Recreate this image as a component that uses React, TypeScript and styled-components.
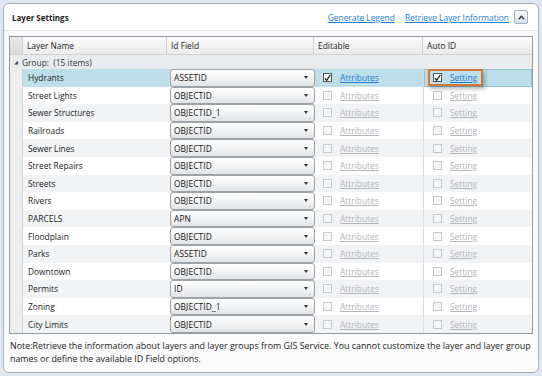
import React from 'react';
import styled, {createGlobalStyle} from 'styled-components';

const GlobalStyle = createGlobalStyle`
  html, body {
    margin: 0;
    padding: 0;
    background: #dfe7f0;
  }
  body {
    font-family: 'Open Sans', 'Liberation Sans', sans-serif;
    font-size: 8.4px;
    color: #222;
  }
`;

const Page = styled.div`
  width: 542px;
  height: 376px;
  padding: 3px;
  box-sizing: border-box;
`;

const Panel = styled.div`
  height: 370px;
  box-sizing: border-box;
  background: #fff;
  border: 1px solid #a3b1bf;
  border-radius: 6px;
  display: flex;
  flex-direction: column;
`;

const Header = styled.div`
  height: 26px;
  display: flex;
  align-items: center;
  padding: 0 10px 0 8px;
  border-bottom: 1px solid #e6e6e6;
  border-radius: 6px 6px 0 0;
  .title {
    font-weight: 700;
    font-size: 8px;
    flex: 1;
  }
`;

const HeaderLink = styled.a`
  color: #2280d4;
  text-decoration: underline;
  margin-left: 10px;
  cursor: pointer;
`;

const CollapseButton = styled.button`
  width: 14px;
  height: 14px;
  margin-left: 5px;
  padding: 0;
  border: 1px solid #9fb3c6;
  border-radius: 2px;
  background: linear-gradient(#f7fafd, #d5e2ee);
  display: flex;
  align-items: center;
  justify-content: center;
  svg {
    width: 7px;
    height: 5px;
  }
`;

const Body = styled.div`
  flex: 1;
  padding: 5px 5px 0 5px;
  background: #fbfbfb;
  border-radius: 0 0 6px 6px;
`;

const Grid = styled.div`
  border: 1px solid #8e9ba7;
  background: #fff;
`;

const cols = '13px 144px 147px 109px 1fr';

const HeadRow = styled.div`
  display: grid;
  grid-template-columns: ${cols};
  height: 17px;
  background: linear-gradient(#fafafa, #ebebeb);
  border-bottom: 1px solid #d2d2d2;
`;

const HeadCell = styled.div<{$gutter?: boolean}>`
  display: flex;
  align-items: center;
  padding-left: 4px;
  border-right: 1px solid #d0d0d0;
  background: ${p => p.$gutter ? 'linear-gradient(#e9e9e9, #dadada)' : 'transparent'};
  &:last-child {
    border-right: none;
  }
`;

const GroupRow = styled.div`
  height: 14px;
  display: flex;
  align-items: center;
  padding-left: 4px;
  background: #e9ecee;
  color: #333;
  .tri {
    font-size: 5px;
    margin-right: 4px;
    color: #444;
  }
`;

const Row = styled.div<{$alt?: boolean; $selected?: boolean}>`
  display: grid;
  grid-template-columns: ${cols};
  height: 17.6px;
  background: ${p => p.$selected ? '#bddeea' : p.$alt ? '#f1f3f5' : '#fff'};
`;

const Gutter = styled.div`
  background: #eceef0;
  border-right: 1px solid #cfd3d6;
`;

const NameCell = styled.div`
  display: flex;
  align-items: center;
  padding-left: 5px;
`;

const IdCell = styled.div`
  padding: 0 0 0 3px;
  display: flex;
  align-items: stretch;
`;

const Dropdown = styled.div`
  flex: 1;
  margin: 0 -1px 0 0;
  display: flex;
  align-items: center;
  justify-content: space-between;
  padding: 0 6px 0 3px;
  border: 1px solid #9ea3a8;
  border-radius: 3px;
  background: linear-gradient(#ffffff 0%, #f3f4f5 50%, #e1e3e6 100%);
  color: #111;
  font-size: 8.4px;
  letter-spacing: 0.1px;
  .arrow {
    width: 0;
    height: 0;
    border-left: 2.5px solid transparent;
    border-right: 2.5px solid transparent;
    border-top: 3px solid #333;
  }
`;

const CheckCell = styled.div<{$focus?: boolean; $divider?: boolean}>`
  display: flex;
  align-items: center;
  padding-left: 4px;
  border-left: ${p => p.$divider ? '1px solid #dadde0' : 'none'};
  box-shadow: ${p => p.$focus ? 'inset 0 0 0 1px #8cc3d6' : 'none'};
`;

const CheckWrap = styled.div<{$highlight?: boolean}>`
  display: flex;
  align-items: center;
  height: 13px;
  padding: 0 4px 0 3px;
  border: 2px solid ${p => p.$highlight ? '#d8752f' : 'transparent'};
  box-shadow: ${p => p.$highlight ? '2px 3px 4px rgba(0,0,0,0.28)' : 'none'};
`;

const Box = styled.span<{$checked?: boolean}>`
  width: 9px;
  height: 9px;
  box-sizing: border-box;
  border: 1px solid ${p => p.$checked ? '#555' : '#c5c9cd'};
  background: ${p => p.$checked ? '#fff' : '#f6f7f8'};
  display: flex;
  align-items: center;
  justify-content: center;
  margin-right: 8px;
  svg {
    width: 8px;
    height: 8px;
  }
`;

const CellLink = styled.a<{$enabled?: boolean}>`
  color: ${p => p.$enabled ? '#2280d4' : '#b3b6ba'};
  text-decoration: underline;
  cursor: pointer;
`;

const Note = styled.p`
  margin: 5px 0 0 1px;
  font-size: 8.9px;
  line-height: 13px;
  color: #222;
`;

const layers: [string, string][] = [
  ['Hydrants', 'ASSETID'],
  ['Street Lights', 'OBJECTID'],
  ['Sewer Structures', 'OBJECTID_1'],
  ['Railroads', 'OBJECTID'],
  ['Sewer Lines', 'OBJECTID'],
  ['Street Repairs', 'OBJECTID'],
  ['Streets', 'OBJECTID'],
  ['Rivers', 'OBJECTID'],
  ['PARCELS', 'APN'],
  ['Floodplain', 'OBJECTID'],
  ['Parks', 'ASSETID'],
  ['Downtown', 'OBJECTID'],
  ['Permits', 'ID'],
  ['Zoning', 'OBJECTID_1'],
  ['City Limits', 'OBJECTID'],
];

const Tick = () => (
  <svg viewBox="0 0 8 8">
    <path d="M1 4.2 L3 6.8 L7.2 0.4" fill="none" stroke="#222" strokeWidth="1.4" />
  </svg>
);

const Check = ({checked, label, highlight}: {checked: boolean; label: string; highlight?: boolean}) => (
  <CheckWrap $highlight={highlight}>
    <Box $checked={checked}>{checked && <Tick />}</Box>
    <CellLink $enabled={checked}>{label}</CellLink>
  </CheckWrap>
);

export default function App() {
  return (
    <Page>
      <GlobalStyle />
      <Panel>
        <Header>
          <span className="title">Layer Settings</span>
          <HeaderLink>Generate Legend</HeaderLink>
          <HeaderLink>Retrieve Layer Information</HeaderLink>
          <CollapseButton>
            <svg viewBox="0 0 7 5">
              <path d="M0.8 4.2 L3.5 1.2 L6.2 4.2" fill="none" stroke="#333" strokeWidth="1.3" />
            </svg>
          </CollapseButton>
        </Header>
        <Body>
          <Grid>
            <HeadRow>
              <HeadCell $gutter />
              <HeadCell>Layer Name</HeadCell>
              <HeadCell>Id Field</HeadCell>
              <HeadCell>Editable</HeadCell>
              <HeadCell>Auto ID</HeadCell>
            </HeadRow>
            <GroupRow>
              <span className="tri">◢</span>
              Group:&nbsp; (15 items)
            </GroupRow>
            {layers.map(([name, field], i) => {
              const selected = i === 0;
              return (
                <Row key={name} $alt={i % 2 === 0} $selected={selected}>
                  <Gutter />
                  <NameCell>{name}</NameCell>
                  <IdCell>
                    <Dropdown>
                      {field}
                      <span className="arrow" />
                    </Dropdown>
                  </IdCell>
                  <CheckCell>
                    <Check checked={selected} label="Attributes" />
                  </CheckCell>
                  <CheckCell $divider $focus={selected}>
                    <Check checked={selected} label="Setting" highlight={selected} />
                  </CheckCell>
                </Row>
              );
            })}
          </Grid>
          <Note>
            Note:Retrieve the information about layers and layer groups from GIS Service. You cannot customize the layer and layer group names or define the available ID Field options.
          </Note>
        </Body>
      </Panel>
    </Page>
  );
}
